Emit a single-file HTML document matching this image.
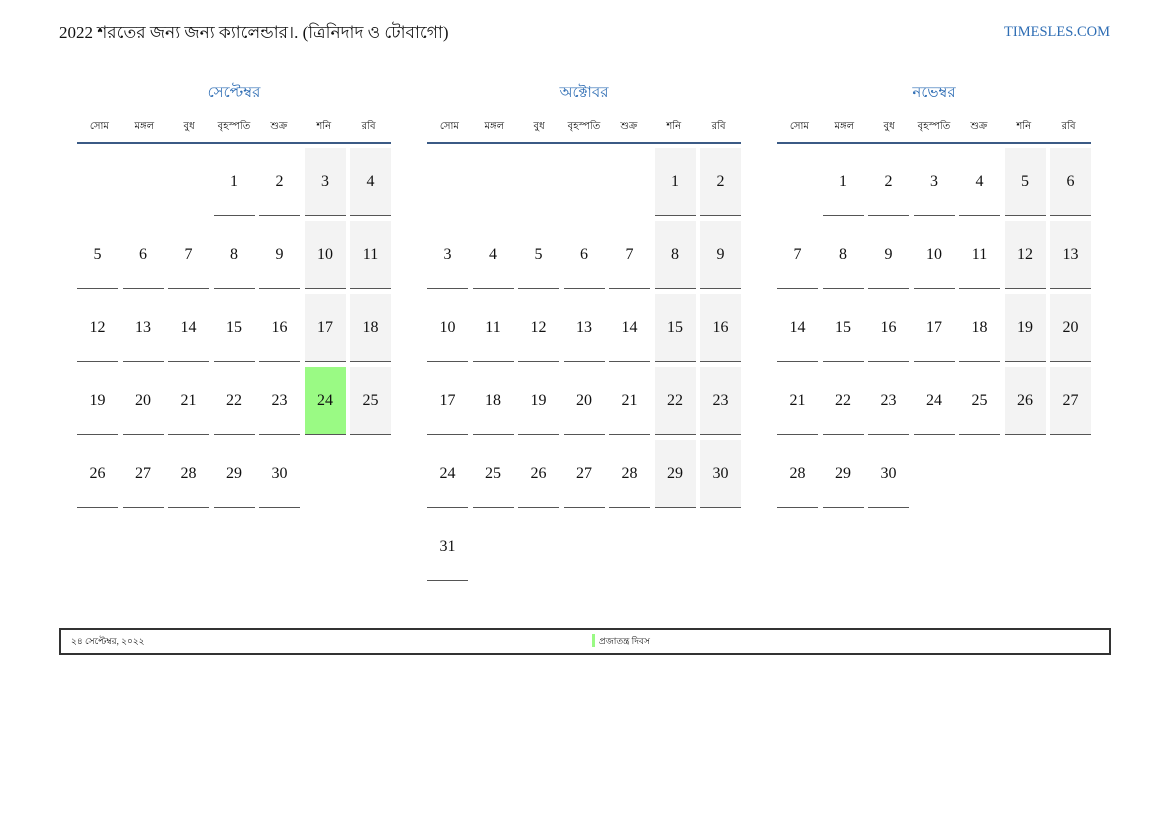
<!DOCTYPE html>
<html><head><meta charset="utf-8">
<style>
*{margin:0;padding:0;box-sizing:border-box}
body{width:1169px;height:827px;background:#fff;position:relative;font-family:"Liberation Serif",serif;color:#111;overflow:hidden}
.title{position:absolute;left:59px;top:20px;font-size:17px;white-space:nowrap}
.site{position:absolute;right:59px;top:24px;font-size:14.5px;color:#2e6db4}
.month{position:absolute;top:82px;width:314px}
.mname{text-align:center;color:#2e6db4;font-size:15px;height:22px;line-height:22px}
.dn{display:grid;grid-template-columns:repeat(7,1fr);font-size:10px;text-align:center;height:40px;line-height:22px;padding-top:12px;border-bottom:2px solid #3b5a85}
.grid{display:grid;grid-template-columns:repeat(7,41px);column-gap:4.5px;row-gap:5px;grid-auto-rows:68px;margin-top:4px}
.grid div{font-size:16px;text-align:center;line-height:68px}
.d{border-bottom:1.5px solid #555}
.w{background:#f3f3f3;border-bottom:1.5px solid #555}
.g{background:#9afa84;border-bottom:1.5px solid #555}
.foot{position:absolute;left:59px;top:628px;width:1052px;height:27px;border:2px solid #333;font-size:9px}
.foot .a{position:absolute;left:10px;top:4px}
.foot .bar{position:absolute;left:531px;top:4px;width:3px;height:13px;background:#9afa84}
.foot .b{position:absolute;left:538px;top:4px}
</style></head><body>
<div class="title">2022 শরতের জন্য জন্য ক্যালেন্ডার।. (ত্রিনিদাদ ও টোবাগো)</div>
<div class="site">TIMESLES.COM</div>

<div class="month" style="left:77px">
<div class="mname">সেপ্টেম্বর</div>
<div class="dn"><span>সোম</span><span>মঙ্গল</span><span>বুধ</span><span>বৃহস্পতি</span><span>শুক্র</span><span>শনি</span><span>রবি</span></div>
<div class="grid">
<div></div><div></div><div></div><div class="d">1</div><div class="d">2</div><div class="w">3</div><div class="w">4</div>
<div class="d">5</div><div class="d">6</div><div class="d">7</div><div class="d">8</div><div class="d">9</div><div class="w">10</div><div class="w">11</div>
<div class="d">12</div><div class="d">13</div><div class="d">14</div><div class="d">15</div><div class="d">16</div><div class="w">17</div><div class="w">18</div>
<div class="d">19</div><div class="d">20</div><div class="d">21</div><div class="d">22</div><div class="d">23</div><div class="g">24</div><div class="w">25</div>
<div class="d">26</div><div class="d">27</div><div class="d">28</div><div class="d">29</div><div class="d">30</div>
</div></div>

<div class="month" style="left:427px">
<div class="mname">অক্টোবর</div>
<div class="dn"><span>সোম</span><span>মঙ্গল</span><span>বুধ</span><span>বৃহস্পতি</span><span>শুক্র</span><span>শনি</span><span>রবি</span></div>
<div class="grid">
<div></div><div></div><div></div><div></div><div></div><div class="w">1</div><div class="w">2</div>
<div class="d">3</div><div class="d">4</div><div class="d">5</div><div class="d">6</div><div class="d">7</div><div class="w">8</div><div class="w">9</div>
<div class="d">10</div><div class="d">11</div><div class="d">12</div><div class="d">13</div><div class="d">14</div><div class="w">15</div><div class="w">16</div>
<div class="d">17</div><div class="d">18</div><div class="d">19</div><div class="d">20</div><div class="d">21</div><div class="w">22</div><div class="w">23</div>
<div class="d">24</div><div class="d">25</div><div class="d">26</div><div class="d">27</div><div class="d">28</div><div class="w">29</div><div class="w">30</div>
<div class="d">31</div>
</div></div>

<div class="month" style="left:777px">
<div class="mname">নভেম্বর</div>
<div class="dn"><span>সোম</span><span>মঙ্গল</span><span>বুধ</span><span>বৃহস্পতি</span><span>শুক্র</span><span>শনি</span><span>রবি</span></div>
<div class="grid">
<div></div><div class="d">1</div><div class="d">2</div><div class="d">3</div><div class="d">4</div><div class="w">5</div><div class="w">6</div>
<div class="d">7</div><div class="d">8</div><div class="d">9</div><div class="d">10</div><div class="d">11</div><div class="w">12</div><div class="w">13</div>
<div class="d">14</div><div class="d">15</div><div class="d">16</div><div class="d">17</div><div class="d">18</div><div class="w">19</div><div class="w">20</div>
<div class="d">21</div><div class="d">22</div><div class="d">23</div><div class="d">24</div><div class="d">25</div><div class="w">26</div><div class="w">27</div>
<div class="d">28</div><div class="d">29</div><div class="d">30</div>
</div></div>

<div class="foot"><span class="a">২৪ সেপ্টেম্বর, ২০২২</span><span class="bar"></span><span class="b">প্রজাতন্ত্র দিবস</span></div>
</body></html>
